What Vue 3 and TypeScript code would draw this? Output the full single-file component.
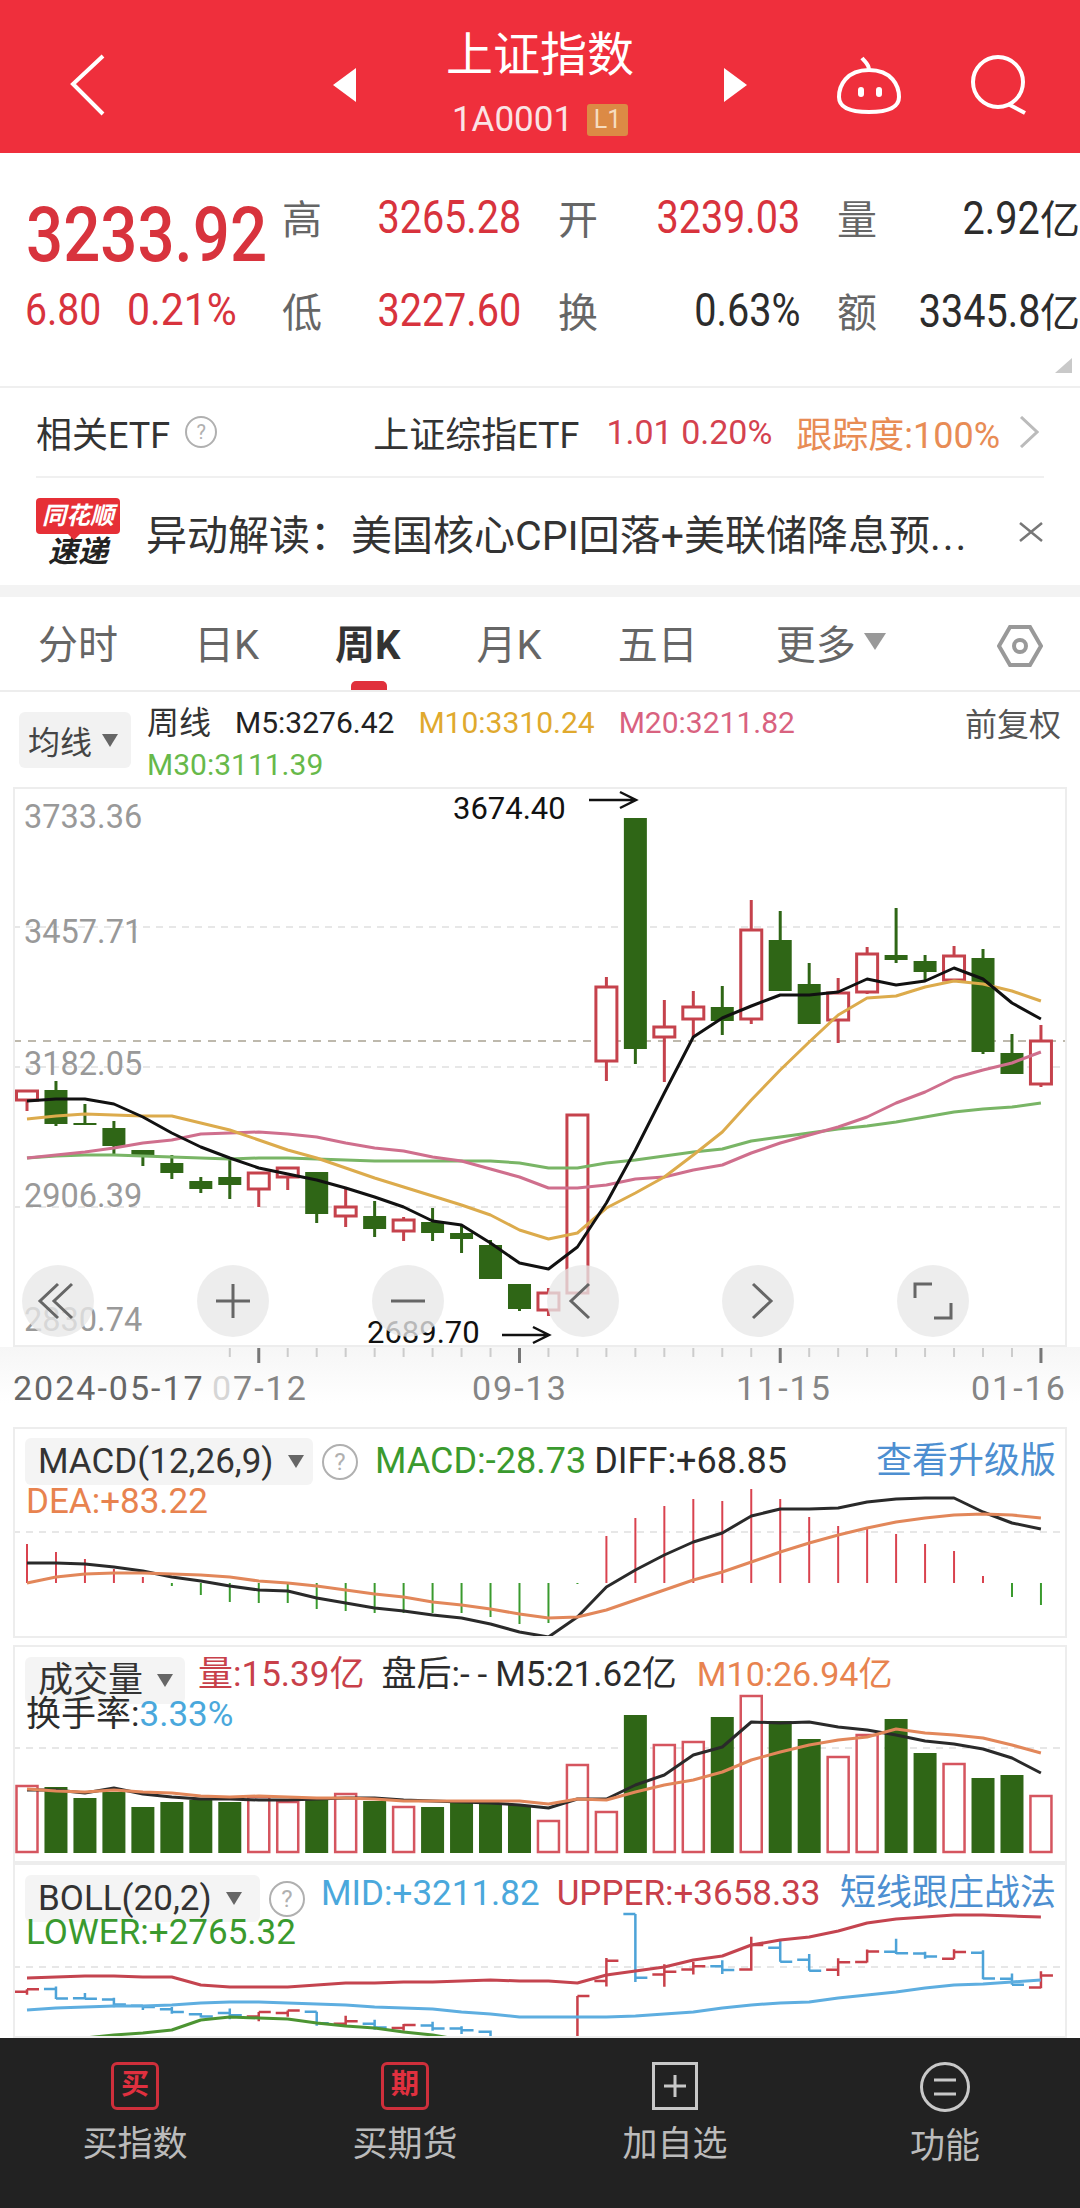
<script setup lang="ts">
type Candle = [number, number, number, number]

// y values are page pixels, each series has one value per week
const X0 = 27
const STEP = 28.97
const xAt = (i: number) => X0 + STEP * i

const candles: Candle[] = [
  [1091, 1091, 1100, 1111], [1081, 1090, 1124, 1126], [1104, 1123, 1125, 1125], [1121, 1128, 1146, 1156],
  [1150, 1150, 1155, 1166], [1155, 1163, 1173, 1179], [1177, 1181, 1189, 1193], [1160, 1177, 1185, 1199],
  [1173, 1173, 1189, 1207], [1168, 1168, 1177, 1190], [1172, 1172, 1214, 1223], [1187, 1207, 1216, 1227],
  [1201, 1216, 1229, 1237], [1217, 1220, 1231, 1241], [1208, 1222, 1233, 1241], [1225, 1233, 1239, 1253],
  [1240, 1245, 1279, 1279], [1284, 1284, 1309, 1311], [1288, 1293, 1310, 1316], [1115, 1115, 1293, 1293],
  [977, 987, 1061, 1081], [818, 818, 1049, 1064], [1000, 1027, 1037, 1082], [991, 1007, 1019, 1037],
  [986, 1007, 1021, 1035], [900, 930, 1019, 1024], [911, 940, 991, 991], [963, 984, 1024, 1024],
  [978, 993, 1020, 1043], [947, 954, 992, 994], [908, 955, 960, 963], [955, 961, 972, 980],
  [946, 956, 980, 980], [949, 958, 1052, 1054], [1034, 1053, 1074, 1074], [1025, 1041, 1084, 1087],
]
const isUp = [
  true, false, false, false, false, false, false, false, true, true, false, true,
  false, true, false, false, false, false, true, true, true, false, true, true,
  false, true, false, false, true, true, false, false, true, false, false, true,
]

const m5 = [1101, 1099, 1099, 1104, 1117, 1133, 1147, 1158, 1168, 1174, 1180, 1188, 1197, 1207, 1221, 1225, 1243, 1263, 1269, 1247, 1203, 1150, 1093, 1037, 1018, 1006, 995, 995, 992, 979, 985, 981, 968, 979, 1003, 1019]
const m10 = [1119, 1116, 1114, 1115, 1116, 1116, 1123, 1130, 1140, 1150, 1158, 1168, 1178, 1187, 1196, 1205, 1215, 1230, 1239, 1233, 1208, 1193, 1177, 1155, 1132, 1100, 1070, 1042, 1015, 998, 996, 987, 981, 984, 991, 1001]
const m20 = [1158, 1155, 1152, 1148, 1143, 1140, 1134, 1133, 1132, 1134, 1137, 1143, 1148, 1151, 1157, 1161, 1169, 1177, 1188, 1188, 1185, 1179, 1177, 1170, 1165, 1153, 1143, 1135, 1127, 1117, 1103, 1092, 1078, 1070, 1063, 1052]
const m30 = [1158, 1156, 1155, 1155, 1156, 1157, 1158, 1159, 1158, 1158, 1159, 1160, 1161, 1161, 1161, 1161, 1161, 1163, 1168, 1168, 1163, 1160, 1156, 1152, 1149, 1141, 1137, 1133, 1129, 1126, 1122, 1117, 1112, 1109, 1107, 1103]

const macdBars = [1544, 1552, 1559, 1569, 1577, 1586, 1595, 1602, 1603, 1603, 1609, 1611, 1613, 1613, 1613, 1613, 1617, 1624, 1623, 1584, 1536, 1518, 1506, 1499, 1501, 1489, 1499, 1517, 1526, 1528, 1534, 1544, 1551, 1576, 1597, 1605]
const macdDiff = [1563, 1563, 1564, 1567, 1571, 1577, 1581, 1586, 1590, 1591, 1598, 1603, 1608, 1611, 1615, 1618, 1624, 1632, 1637, 1617, 1587, 1570, 1555, 1542, 1533, 1516, 1509, 1509, 1508, 1502, 1499, 1498, 1498, 1512, 1523, 1529]
const macdDea = [1583, 1577, 1574, 1573, 1573, 1574, 1575, 1577, 1581, 1583, 1586, 1590, 1594, 1597, 1602, 1605, 1609, 1614, 1618, 1617, 1610, 1600, 1590, 1580, 1572, 1562, 1552, 1543, 1535, 1528, 1522, 1518, 1515, 1514, 1515, 1518]

const volBars = [1786, 1787, 1798, 1792, 1807, 1802, 1800, 1802, 1797, 1802, 1800, 1794, 1801, 1807, 1807, 1803, 1803, 1805, 1821, 1765, 1812, 1715, 1745, 1742, 1717, 1696, 1721, 1739, 1757, 1735, 1719, 1753, 1764, 1778, 1775, 1796]
const volM5 = [1790, 1790, 1793, 1788, 1794, 1797, 1799, 1799, 1800, 1800, 1799, 1798, 1798, 1800, 1801, 1802, 1803, 1805, 1808, 1799, 1799, 1785, 1775, 1755, 1747, 1722, 1723, 1722, 1727, 1730, 1735, 1741, 1744, 1749, 1758, 1773]
const volM10 = [1789, 1791, 1792, 1790, 1792, 1793, 1796, 1797, 1796, 1797, 1798, 1798, 1799, 1801, 1801, 1801, 1801, 1801, 1804, 1799, 1800, 1792, 1785, 1780, 1772, 1760, 1752, 1745, 1740, 1737, 1729, 1733, 1735, 1738, 1745, 1753]

const bollUpper = [1978, 1977, 1976, 1976, 1977, 1977, 1985, 1987, 1987, 1987, 1985, 1983, 1983, 1982, 1982, 1981, 1980, 1981, 1981, 1983, 1975, 1971, 1967, 1960, 1956, 1945, 1940, 1937, 1931, 1923, 1919, 1917, 1915, 1915, 1916, 1917]
const bollMid = [2010, 2008, 2007, 2006, 2006, 2005, 2003, 2002, 2002, 2003, 2004, 2005, 2007, 2008, 2009, 2012, 2014, 2017, 2017, 2017, 2017, 2016, 2014, 2012, 2008, 2005, 2003, 2002, 1998, 1995, 1992, 1988, 1985, 1984, 1982, 1980]
const bollLower = [2047, 2042, 2038, 2035, 2033, 2030, 2020, 2017, 2018, 2019, 2023, 2026, 2028, 2032, 2035, 2040, 2046, 2052, 2056, 2060, 2060, 2062, 2064, 2066, 2070, 2072, 2075, 2080, 2084, 2086, 2090, 2092, 2094, 2096, 2097, 2098]

const line = (ys: number[]) => ys.map((y, i) => `${i ? 'L' : 'M'}${xAt(i).toFixed(1)} ${y}`).join(' ')

// the BOLL panel repeats the candles as bars on its own scale
const bollY = (y: number) => 1914 + (y - 818) * 0.276
const bollBars = candles.map((c, i) => {
  const x = xAt(i)
  const open = bollY(isUp[i] ? c[2] : c[1])
  const close = bollY(isUp[i] ? c[1] : c[2])
  return {
    up: isUp[i],
    d: `M${x} ${bollY(c[0])} V${bollY(c[3])} M${x - 12} ${open} H${x} M${x} ${close} H${x + 12}`,
  }
})

const yLabels = [
  { text: '3733.36', y: 828 },
  { text: '3457.71', y: 943 },
  { text: '3182.05', y: 1075 },
  { text: '2906.39', y: 1207 },
  { text: '2830.74', y: 1331 },
]
const gridY = [927, 1067, 1207]
const tabs = ['分时', '日K', '周K', '月K', '五日']
const ticks = Array.from({ length: 29 }, (_, i) => i + 7)
const majorTicks = [8, 17, 26, 35]
const toolIcons = [
  'M36 19 L18 36 L36 53 M50 19 L32 36 L50 53',
  'M19 36 H53 M36 19 V53',
  'M19 36 H53',
  'M42 19 L24 36 L42 53',
  'M31 19 L49 36 L31 53',
  'M18 33 V19 H35 M37 53 H54 V38',
]
</script>

<template>
  <div class="page">
    <header class="topbar">
      <div class="topbar-left">
        <svg width="36" height="62" viewBox="0 0 36 62"><path d="M33 2 L3 30 L33 60" class="white-line" /></svg>
      </div>
      <div class="topbar-mid">
        <span class="tri tri-left"></span>
        <div class="title-col">
          <div class="title">上证指数</div>
          <div class="code">1A0001 <span class="level">L1</span></div>
        </div>
        <span class="tri tri-right"></span>
      </div>
      <div class="topbar-right">
        <svg width="66" height="60" viewBox="0 0 66 60">
          <path d="M33 15 C10 15 3 31 3 42 C3 53 14 57 33 57 C52 57 63 53 63 42 C63 31 56 15 33 15 Z M33 15 C33 9 29 7 26 3" class="white-line" />
          <rect x="22" y="32" width="6" height="10" rx="3" fill="#fff" />
          <rect x="40" y="32" width="6" height="10" rx="3" fill="#fff" />
        </svg>
        <svg width="58" height="60" viewBox="0 0 58 60">
          <circle cx="28" cy="27" r="25" class="white-line" />
          <path d="M38 49 L55 58" class="white-line" />
        </svg>
      </div>
    </header>

    <section class="quote">
      <div class="quote-main">
        <div class="price"><span class="squeeze-left">3233.92</span></div>
        <div class="change">
          <span class="squeeze-left">6.80</span>
          <span class="squeeze-left wide">0.21%</span>
        </div>
      </div>
      <div class="stats">
        <div class="stat"><span class="stat-label">高</span><span class="num red">3265.28</span></div>
        <div class="stat"><span class="stat-label">开</span><span class="num red">3239.03</span></div>
        <div class="stat"><span class="stat-label">量</span><span class="dark"><span class="num">2.92</span>亿</span></div>
        <div class="stat"><span class="stat-label">低</span><span class="num red">3227.60</span></div>
        <div class="stat"><span class="stat-label">换</span><span class="num dark">0.63%</span></div>
        <div class="stat"><span class="stat-label">额</span><span class="dark"><span class="num">3345.8</span>亿</span></div>
      </div>
      <span class="corner"></span>
    </section>

    <section class="etf">
      <div class="etf-row">
        <span class="etf-name">相关ETF</span>
        <span class="help etf-help">?</span>
        <span class="etf-fund">上证综指ETF</span>
        <span class="etf-change">1.01 0.20%</span>
        <span class="etf-track">跟踪度:100%</span>
        <svg width="20" height="32" viewBox="0 0 20 32"><path d="M2 1 L18 16 L2 31" class="thin-gray" /></svg>
      </div>
      <div class="news-row">
        <div class="news-logo">
          <div class="logo-top">同花顺</div>
          <div class="logo-bottom">速递</div>
        </div>
        <span class="news-text">异动解读：美国核心CPI回落+美联储降息预<span class="dots">...</span></span>
        <svg width="26" height="20" viewBox="0 0 26 20"><path d="M2 1 L24 19 M24 1 L2 19" class="thin-close" /></svg>
      </div>
    </section>

    <nav class="tabs">
      <span v-for="tab in tabs" :key="tab" class="tab" :class="{ active: tab === '周K' }">{{ tab }}</span>
      <span class="tab more">更多<span class="more-tri"></span></span>
      <svg class="hex" width="46" height="44" viewBox="0 0 46 44">
        <path d="M13 3 H33 L44 22 L33 41 H13 L2 22 Z" fill="none" stroke="#999" stroke-width="4" />
        <circle cx="23" cy="22" r="6" fill="none" stroke="#999" stroke-width="4" />
      </svg>
    </nav>

    <div class="ma-row">
      <div class="select ma-select">均线<span class="select-tri"></span></div>
      <div class="ma-values">
        <span class="ma-kind">周线</span>
        <span class="ma-black">M5:3276.42</span>
        <span class="ma-yellow">M10:3310.24</span>
        <span class="ma-pink">M20:3211.82</span>
        <span class="ma-green">M30:3111.39</span>
      </div>
      <span class="adjust">前复权</span>
    </div>

    <div class="main-chart">
      <svg class="fill-svg" viewBox="0 787 1054 560" width="1054" height="560">
        <g transform="translate(-13 0)">
          <line v-for="y in gridY" :key="y" x1="13" x2="1067" :y1="y" :y2="y" class="grid" />
          <line x1="13" x2="1067" y1="1041" y2="1041" class="price-line" />
          <text v-for="l in yLabels" :key="l.text" x="24" :y="l.y" class="y-label">{{ l.text }}</text>
          <g v-for="(c, i) in candles" :key="i">
            <template v-if="isUp[i]">
              <path :d="`M${xAt(i)} ${c[0]} V${c[1]} M${xAt(i)} ${c[2]} V${c[3]}`" class="wick-red" />
              <rect :x="xAt(i) - 10.5" :y="c[1]" width="21" :height="c[2] - c[1]" class="body-red" />
            </template>
            <template v-else>
              <path :d="`M${xAt(i)} ${c[0]} V${c[3]}`" class="wick-green" />
              <rect :x="xAt(i) - 11.5" :y="c[1]" width="23" :height="c[2] - c[1]" class="body-green" />
            </template>
          </g>
          <path :d="line(m30)" class="ma ma-l-green" />
          <path :d="line(m20)" class="ma ma-l-pink" />
          <path :d="line(m10)" class="ma ma-l-yellow" />
          <path :d="line(m5)" class="ma ma-l-black" />
          <text x="453" y="819" class="mark">3674.40</text>
          <path d="M589 800 H635 M620 792 L636 800 L620 808" class="arrow" />
          <text x="367" y="1343" class="mark">2689.70</text>
          <path d="M502 1335 H548 M533 1327 L549 1335 L533 1343" class="arrow" />
        </g>
      </svg>
      <div class="tools">
        <span v-for="d in toolIcons" :key="d" class="tool">
          <svg width="72" height="72" viewBox="0 0 72 72"><path :d="d" class="tool-line" /></svg>
        </span>
      </div>
    </div>

    <svg class="axis" width="1080" height="80" viewBox="0 1347 1080 80">
      <line
        v-for="i in ticks"
        :key="i"
        :x1="xAt(i)"
        :x2="xAt(i)"
        y1="1348"
        :y2="majorTicks.includes(i) ? 1363 : 1357"
        :class="majorTicks.includes(i) ? 'tick-major' : 'tick-minor'"
      />
      <text x="13" y="1400" class="axis-label first">2024-05-17</text>
      <text x="212" y="1400" class="axis-label"><tspan fill="#d6d6d6">0</tspan>7-12</text>
      <text x="472" y="1400" class="axis-label">09-13</text>
      <text x="736" y="1400" class="axis-label">11-15</text>
      <text x="971" y="1400" class="axis-label">01-16</text>
    </svg>

    <div class="panel macd">
      <svg class="fill-svg" width="1054" height="211" viewBox="13 1427 1054 211">
        <line x1="13" x2="1067" y1="1532" y2="1532" class="grid" />
        <line
          v-for="(y, i) in macdBars"
          :key="i"
          :x1="xAt(i)"
          :x2="xAt(i)"
          y1="1583"
          :y2="y"
          :class="i < 5 || (i > 19 && i < 34) ? 'bar-red' : 'bar-green'"
        />
        <path :d="line(macdDiff)" class="ma ma-thin-black" />
        <path :d="line(macdDea)" class="ma ma-orange" />
      </svg>
      <div class="panel-head">
        <div class="select panel-select macd-select">MACD(12,26,9)<span class="select-tri"></span></div>
        <span class="help panel-help">?</span>
        <span class="t-green">MACD:-28.73</span>
        <span class="t-dark">DIFF:+68.85</span>
        <span class="t-link">查看升级版</span>
      </div>
      <div class="panel-second t-orange">DEA:+83.22</div>
    </div>

    <div class="panel vol">
      <svg class="fill-svg" width="1054" height="218" viewBox="13 1645 1054 218">
        <line x1="13" x2="1067" y1="1748" y2="1748" class="grid" />
        <template v-for="(y, i) in volBars" :key="i">
          <rect v-if="isUp[i]" :x="xAt(i) - 10.5" :y="y" width="21" :height="1852 - y" class="vol-red" />
          <rect v-else :x="xAt(i) - 11.5" :y="y" width="23" :height="1853 - y" class="body-green" />
        </template>
        <path :d="line(volM5)" class="ma ma-thin-black" />
        <path :d="line(volM10)" class="ma ma-orange" />
      </svg>
      <div class="panel-head vol-head">
        <div class="select panel-select vol-select">成交量<span class="select-tri"></span></div>
        <span class="t-red">量:15.39亿</span>
        <span class="t-dark">盘后:<span class="dashes">--</span>M5:21.62亿</span>
        <span class="t-orange">M10:26.94亿</span>
      </div>
      <div class="panel-second turnover">换手率:<span class="t-blue">3.33%</span></div>
    </div>

    <div class="panel boll">
      <svg class="fill-svg" width="1054" height="175" viewBox="13 1863 1054 175">
        <line x1="13" x2="1067" y1="1967" y2="1967" class="grid" />
        <path v-for="(b, i) in bollBars" :key="i" :d="b.d" :class="b.up ? 'ohlc-red' : 'ohlc-blue'" />
        <path :d="line(bollUpper)" class="ma ma-red" />
        <path :d="line(bollMid)" class="ma ma-blue" />
        <path :d="line(bollLower)" class="ma ma-lower" />
      </svg>
      <div class="panel-head boll-head">
        <div class="select panel-select boll-select">BOLL(20,2)<span class="select-tri"></span></div>
        <span class="help panel-help">?</span>
        <span class="t-blue">MID:+3211.82</span>
        <span class="t-red">UPPER:+3658.33</span>
        <span class="t-link">短线跟庄战法</span>
      </div>
      <div class="panel-second t-green boll-second">LOWER:+2765.32</div>
    </div>

    <footer class="actions">
      <div class="action">
        <span class="action-badge">买</span>
        <span>买指数</span>
      </div>
      <div class="action">
        <span class="action-badge">期</span>
        <span>买期货</span>
      </div>
      <div class="action">
        <svg width="46" height="48" viewBox="0 0 46 48">
          <rect x="1.5" y="1.5" width="43" height="45" fill="none" stroke="#c8c8c8" stroke-width="3" />
          <path d="M23 13 V35 M12 24 H34" stroke="#c8c8c8" stroke-width="3" />
        </svg>
        <span>加自选</span>
      </div>
      <div class="action">
        <svg width="50" height="50" viewBox="0 0 50 50">
          <circle cx="25" cy="25" r="23.5" fill="none" stroke="#c8c8c8" stroke-width="3" />
          <path d="M14 18 H36 M14 32 H36" stroke="#c8c8c8" stroke-width="3" />
        </svg>
        <span>功能</span>
      </div>
    </footer>
  </div>
</template>

<style>
html,
body {
  margin: 0;
  background: #fff;
}
</style>

<style scoped>
.page {
  width: 1080px;
  height: 2208px;
  overflow: hidden;
  display: flex;
  flex-direction: column;
  background: #fff;
  font-family: Roboto, "Noto Sans CJK SC", sans-serif;
  color: #333;
}

.white-line {
  fill: none;
  stroke: #fff;
  stroke-width: 4;
}

.topbar {
  flex: none;
  height: 153px;
  display: grid;
  grid-template-columns: 1fr 414px 1fr;
  background: #ef2f3c;
  color: #fff;
}

.topbar-left {
  padding: 54px 0 0 70px;
}

.topbar-mid {
  display: flex;
  justify-content: space-between;
  align-items: flex-start;
}

.tri {
  margin-top: 68px;
  width: 0;
  height: 0;
  border-top: 17px solid transparent;
  border-bottom: 17px solid transparent;
}

.tri-left {
  border-right: 23px solid #fff;
}

.tri-right {
  border-left: 23px solid #fff;
}

.title-col {
  display: flex;
  flex-direction: column;
  align-items: center;
}

.title {
  margin-top: 22px;
  font-size: 47px;
  line-height: 66px;
}

.code {
  margin-top: 14px;
  font-size: 35px;
  line-height: 36px;
  display: flex;
  align-items: center;
  gap: 14px;
  color: #fbe3e5;
}

.level {
  width: 41px;
  height: 32px;
  border-radius: 3px;
  background: #dc8a45;
  font-size: 25px;
  line-height: 32px;
  text-align: center;
  color: #f6dcc0;
}

.topbar-right {
  display: flex;
  justify-content: flex-end;
  align-items: flex-start;
  gap: 68px;
  padding: 55px 52px 0 0;
}

.quote {
  flex: none;
  position: relative;
  height: 235px;
  box-sizing: border-box;
  border-bottom: 2px solid #efefef;
  display: flex;
}

.quote-main {
  width: 282px;
  flex: none;
  padding-left: 25px;
  box-sizing: border-box;
  color: #d8333d;
}

.price {
  margin-top: 34px;
  height: 90px;
  font-size: 76px;
  line-height: 96px;
  font-weight: 500;
  white-space: nowrap;
  padding-left: 1px;
}

.price .squeeze-left {
  transform: scaleX(0.86);
}

.change {
  margin-top: 2px;
  display: flex;
  gap: 14px;
  font-size: 45px;
  line-height: 62px;
}

.squeeze-left {
  display: inline-block;
  transform: scaleX(0.87);
  transform-origin: left center;
}

.squeeze-left.wide {
  transform: scaleX(0.91);
}

.stats {
  flex: none;
  display: grid;
  grid-template-columns: 239px 242px 243px;
  grid-auto-rows: 62px;
  column-gap: 37px;
  row-gap: 31px;
  padding-top: 33px;
}

.stat {
  display: flex;
  justify-content: space-between;
  align-items: center;
  font-size: 40px;
  white-space: nowrap;
}

.stat-label {
  color: #666;
}

.num {
  display: inline-block;
  font-size: 46px;
  transform: scaleX(0.86);
  transform-origin: right center;
}

.red {
  color: #d8333d;
}

.dark {
  color: #2c2c2c;
}

.corner {
  position: absolute;
  right: 8px;
  bottom: 13px;
  width: 0;
  height: 0;
  border-left: 17px solid transparent;
  border-bottom: 15px solid #c9c9c9;
}

.etf {
  flex: none;
  padding: 0 36px;
  height: 209px;
  box-sizing: border-box;
  border-bottom: 12px solid #f3f3f3;
  width: 1080px;
}

.etf-row {
  height: 90px;
  box-sizing: border-box;
  display: flex;
  align-items: center;
  border-bottom: 2px solid #f0f0f0;
  white-space: nowrap;
}

.etf-name {
  font-size: 36px;
  color: #333;
}

.help {
  flex: none;
  box-sizing: border-box;
  display: inline-block;
  border: 2px solid #b0b0b0;
  border-radius: 50%;
  text-align: center;
  color: #b0b0b0;
}

.etf-help {
  margin-left: 15px;
  width: 32px;
  height: 32px;
  font-size: 20px;
  line-height: 28px;
}

.etf-fund {
  margin-left: 156px;
  font-size: 36px;
  color: #333;
}

.etf-change {
  margin-left: 27px;
  font-size: 34px;
  color: #d4424f;
}

.etf-track {
  margin-left: 24px;
  font-size: 36px;
  color: #e88c55;
}

.etf-row svg {
  margin-left: 19px;
}

.thin-gray {
  fill: none;
  stroke: #bbb;
  stroke-width: 3;
}

.thin-close {
  fill: none;
  stroke: #777;
  stroke-width: 2.5;
}

.news-row {
  height: 107px;
  display: flex;
  align-items: center;
  white-space: nowrap;
}

.news-logo {
  flex: none;
  width: 84px;
  text-align: center;
  font-style: italic;
  font-weight: 700;
}

.logo-top {
  position: relative;
  height: 36px;
  border-radius: 4px;
  background: #e62f36;
  color: #fff;
  font-size: 24px;
  line-height: 36px;
}

.logo-top::after {
  content: "";
  position: absolute;
  left: 32px;
  bottom: -6px;
  border-left: 6px solid transparent;
  border-right: 6px solid transparent;
  border-top: 6px solid #e62f36;
}

.logo-bottom {
  margin-top: 4px;
  height: 28px;
  font-size: 30px;
  line-height: 28px;
  color: #222;
}

.news-text {
  margin-left: 26px;
  width: 872px;
  font-size: 41px;
  color: #333;
}

.dots {
  letter-spacing: 2px;
}

.tabs {
  flex: none;
  position: relative;
  height: 95px;
  box-sizing: border-box;
  padding: 0 37px 0 38px;
  border-bottom: 2px solid #ededed;
  display: flex;
  align-items: stretch;
  gap: 76px;
}

.tab {
  position: relative;
  padding-top: 4px;
  font-size: 40px;
  line-height: 89px;
  color: #666;
}

.tab.active {
  font-weight: 700;
  color: #333;
}

.tab.active::after {
  content: "";
  position: absolute;
  left: 16px;
  bottom: 0;
  width: 36px;
  height: 9px;
  border-radius: 5px 5px 0 0;
  background: #e0303b;
}

.more {
  display: flex;
  align-items: center;
  margin-left: 2px;
}

.more-tri {
  margin-left: 8px;
  margin-top: -8px;
  border-left: 11px solid transparent;
  border-right: 11px solid transparent;
  border-top: 17px solid #999;
}

.hex {
  margin-left: auto;
  align-self: center;
  margin-top: 5px;
}

.ma-row {
  flex: none;
  height: 95px;
  position: relative;
  display: flex;
  padding: 0 19px;
  box-sizing: border-box;
}

.select {
  box-sizing: border-box;
  background: #f2f2f2;
  border-radius: 6px;
  display: flex;
  align-items: center;
  white-space: nowrap;
}

.select-tri {
  flex: none;
  border-left: 8px solid transparent;
  border-right: 8px solid transparent;
  border-top: 13px solid #666;
}

.ma-select {
  flex: none;
  margin-top: 20px;
  width: 112px;
  height: 56px;
  padding-left: 9px;
  gap: 10px;
  font-size: 32px;
  color: #444;
}

.ma-values {
  margin-left: 16px;
  width: 680px;
  display: flex;
  flex-wrap: wrap;
  column-gap: 24px;
  font-size: 30px;
  line-height: 40px;
  padding-top: 11px;
  white-space: nowrap;
}

.ma-kind {
  font-size: 32px;
  color: #333;
}

.ma-black {
  color: #222;
}

.ma-yellow {
  color: #e0a92d;
}

.ma-pink {
  color: #d9627f;
}

.ma-green {
  color: #67b94a;
}

.adjust {
  position: absolute;
  right: 19px;
  top: 13px;
  font-size: 32px;
  line-height: 40px;
  color: #555;
}

.main-chart {
  flex: none;
  position: relative;
  width: 1054px;
  height: 560px;
  margin-left: 13px;
}

.fill-svg {
  display: block;
  box-sizing: border-box;
  outline: 2px solid #ededed;
  outline-offset: -2px;
}

.grid {
  stroke: #dfdfdf;
  stroke-width: 1.5;
  stroke-dasharray: 7 6;
}

.price-line {
  stroke: #a9a293;
  stroke-width: 1.5;
  stroke-dasharray: 8 7;
}

.y-label {
  font-size: 32.5px;
  fill: #999;
}

.wick-red {
  fill: none;
  stroke: #c5424c;
  stroke-width: 3;
}

.wick-green {
  fill: none;
  stroke: #2f6616;
  stroke-width: 3;
}

.body-red {
  fill: #fff;
  stroke: #c5424c;
  stroke-width: 3;
}

.body-green {
  fill: #2f6616;
}

.ma {
  fill: none;
  stroke-width: 3;
  stroke-linejoin: round;
}

.ma-l-black {
  stroke: #111;
}

.ma-l-yellow {
  stroke: #dcab4c;
}

.ma-l-pink {
  stroke: #cf6f8d;
}

.ma-l-green {
  stroke: #79b566;
}

.mark {
  font-size: 31px;
  fill: #111;
}

.arrow {
  fill: none;
  stroke: #111;
  stroke-width: 2.5;
}

.tools {
  position: absolute;
  left: 9px;
  top: 478px;
  width: 947px;
  display: flex;
  justify-content: space-between;
}

.tool {
  width: 72px;
  height: 72px;
  border-radius: 50%;
  background: rgba(232, 232, 232, 0.78);
}

.tool svg {
  display: block;
}

.tool-line {
  fill: none;
  stroke: #666;
  stroke-width: 3;
}

.axis {
  flex: none;
  display: block;
  background: linear-gradient(#f6f6f6, #fff 70%);
}

.tick-major {
  stroke: #777;
  stroke-width: 3;
}

.tick-minor {
  stroke: #ccc;
  stroke-width: 2;
}

.axis-label {
  font-size: 34px;
  letter-spacing: 2px;
  fill: #858585;
}

.axis-label.first {
  fill: #666;
}

.panel {
  flex: none;
  position: relative;
  width: 1054px;
  margin-left: 13px;
}

.macd {
  height: 211px;
  margin-bottom: 7px;
}

.vol {
  height: 218px;
}

.boll {
  height: 175px;
}

.bar-red {
  stroke: #d9434f;
  stroke-width: 2;
}

.bar-green {
  stroke: #3a9a2e;
  stroke-width: 2;
}

.ma-thin-black {
  stroke: #2a2a2a;
}

.ma-orange {
  stroke: #e2875a;
}

.ma-red {
  stroke: #c4444f;
}

.ma-blue {
  stroke: #5eaee0;
}

.ma-lower {
  stroke: #4c9432;
}

.vol-red {
  fill: #fff;
  stroke: #d5555f;
  stroke-width: 2.5;
}

.ohlc-red {
  fill: none;
  stroke: #c8404a;
  stroke-width: 2.5;
}

.ohlc-blue {
  fill: none;
  stroke: #4da3d8;
  stroke-width: 2.5;
}

.panel-head {
  position: absolute;
  left: 12px;
  top: 11px;
  right: 11px;
  display: flex;
  align-items: center;
  font-size: 35px;
  line-height: 47px;
  white-space: nowrap;
}

.panel-select {
  flex: none;
  height: 47px;
  padding-left: 13px;
  gap: 14px;
  background: #f4f4f4;
  color: #333;
}

.macd-select {
  width: 288px;
}

.vol-select {
  width: 160px;
}

.boll-select {
  width: 235px;
}

.panel-help {
  margin-left: 9px;
  width: 36px;
  height: 36px;
  font-size: 24px;
  line-height: 32px;
}

.macd .t-green,
.macd .t-dark {
  font-size: 36px;
}

.panel-head .t-green {
  margin-left: 17px;
}

.panel-head .t-dark {
  margin-left: 8px;
}

.t-link {
  margin-left: auto;
  font-size: 36px;
  color: #4d8fd1;
}

.t-green {
  color: #3a9a2e;
}

.t-dark {
  color: #2c2c2c;
}

.t-orange {
  color: #e8834f;
}

.t-red {
  color: #c8404a;
}

.t-blue {
  color: #4aa8dc;
}

.panel-second {
  position: absolute;
  left: 13px;
  top: 54px;
  font-size: 35px;
  line-height: 42px;
  white-space: nowrap;
}

.vol-head {
  top: 12px;
}

.vol-head .t-red,
.vol-head .t-dark,
.vol-head .t-orange {
  align-self: flex-start;
  margin-top: -6px;
}

.vol-head .t-red {
  margin-left: 13px;
}

.vol-head .t-dark {
  margin-left: 17px;
}

.vol-head .t-orange {
  margin-left: 20px;
  font-size: 34px;
}

.dashes {
  letter-spacing: 8px;
}

.turnover {
  top: 49px;
  color: #2c2c2c;
}

.boll-head {
  top: 12px;
}

.boll-head .t-blue,
.boll-head .t-red,
.boll-head .t-link {
  align-self: flex-start;
  margin-top: -5px;
}

.boll-head .t-blue {
  margin-left: 16px;
}

.boll-head .t-red {
  margin-left: 17px;
}

.boll-second {
  top: 49px;
}

.actions {
  flex: none;
  position: relative;
  height: 170px;
  background: #222;
  display: grid;
  grid-template-columns: 270px 270px 270px 270px;
  padding-top: 24px;
  box-sizing: border-box;
}

.action {
  display: flex;
  flex-direction: column;
  align-items: center;
  font-size: 35px;
  color: #bbb;
  line-height: 50px;
  gap: 10px;
}

.action-badge {
  box-sizing: border-box;
  width: 48px;
  height: 48px;
  border: 3px solid #cf2f3b;
  border-radius: 6px;
  color: #e0303f;
  font-size: 28px;
  font-weight: 700;
  line-height: 40px;
  text-align: center;
}
</style>
